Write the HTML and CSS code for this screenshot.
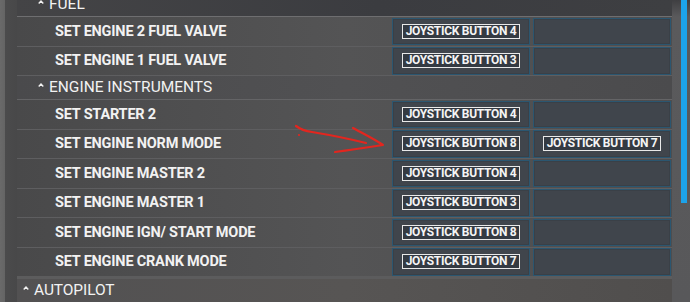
FILE: index.html
```html
<!DOCTYPE html>
<html>
<head>
<meta charset="utf-8">
<link rel="stylesheet" href="styles.css">
</head>
<body>
<div class="app">
  <div class="edge"></div>
  <div class="list">
    <div class="cat sub first"><svg class="caret" viewBox="0 0 6 4"><polyline points="0.7,3.4 3,1 5.3,3.4"/></svg><span>FUEL</span></div>
    <div class="row"><div class="name">SET ENGINE 2 FUEL VALVE</div><div class="cell"><span class="key">JOYSTICK BUTTON 4</span></div><div class="cell"></div></div>
    <div class="row"><div class="name">SET ENGINE 1 FUEL VALVE</div><div class="cell"><span class="key">JOYSTICK BUTTON 3</span></div><div class="cell"></div></div>
    <div class="cat sub"><svg class="caret" viewBox="0 0 6 4"><polyline points="0.7,3.4 3,1 5.3,3.4"/></svg><span>ENGINE INSTRUMENTS</span></div>
    <div class="row"><div class="name">SET STARTER 2</div><div class="cell"><span class="key">JOYSTICK BUTTON 4</span></div><div class="cell"></div></div>
    <div class="row"><div class="name">SET ENGINE NORM MODE</div><div class="cell"><span class="key">JOYSTICK BUTTON 8</span></div><div class="cell"><span class="key">JOYSTICK BUTTON 7</span></div></div>
    <div class="row"><div class="name">SET ENGINE MASTER 2</div><div class="cell"><span class="key">JOYSTICK BUTTON 4</span></div><div class="cell"></div></div>
    <div class="row"><div class="name">SET ENGINE MASTER 1</div><div class="cell"><span class="key">JOYSTICK BUTTON 3</span></div><div class="cell"></div></div>
    <div class="row"><div class="name">SET ENGINE IGN/ START MODE</div><div class="cell"><span class="key">JOYSTICK BUTTON 8</span></div><div class="cell"></div></div>
    <div class="row last"><div class="name">SET ENGINE CRANK MODE</div><div class="cell"><span class="key">JOYSTICK BUTTON 7</span></div><div class="cell"></div></div>
    <div class="cat main"><svg class="caret" viewBox="0 0 6 4"><polyline points="0.7,3.4 3,1 5.3,3.4"/></svg><span>AUTOPILOT</span></div>
  </div>
  <div class="scroll"><div class="track"><div class="thumb"></div></div></div>
  <svg class="arrow" viewBox="0 0 690 302" width="690" height="302">
    <path d="M296 126 C300 129 305 131 312 132 C330 135 350 139 366 143" />
    <path d="M353 128 C362 133 374 139 383 145 C370 147 350 150 335 152" />
    <circle cx="299" cy="135" r="1.1" />
  </svg>
</div>
</body>
</html>
```
FILE: styles.css
```css
html, body {
  margin: 0;
  padding: 0;
  background: #4a4a4b;
  overflow: hidden;
}
.app {
  position: relative;
  display: flex;
  width: 690px;
  height: 302px;
  overflow: hidden;
  font-family: Roboto, "Liberation Sans", sans-serif;
  color: #f2f2f2;
}
.edge {
  width: 17px;
  flex: none;
  background: linear-gradient(to right, #6a6a6a 0, #646464 5px, #4b4b4c 5px, #484849 17px);
}
.list {
  width: 655px;
  flex: none;
  display: flex;
  flex-direction: column;
  background: linear-gradient(to right, #49494a, #545455 50%, #4d4d4f);
}
.cat {
  display: flex;
  align-items: center;
  height: 23px;
  border-bottom: 1px solid #646466;
  font-size: 15.5px;
  font-weight: 400;
  line-height: 23px;
  letter-spacing: 0;
  background: linear-gradient(to right, #4a4a4c, #515153 50%, #4b4b4d);
}
.cat.first {
  margin-top: -7px;
  background: linear-gradient(to right, #444446, #3b3c40 55%, #3e3f42);
  border-bottom-color: #6e6e70;
}
.cat.sub { padding-left: 21px; }
.cat.main {
  padding-left: 6px;
  flex: 1;
  border-bottom: 0;
  letter-spacing: -0.1px;
  background: linear-gradient(to right, #525152, #575554 50%, #504e4d);
}
.caret {
  width: 6px;
  height: 4px;
  margin-right: 5px;
  margin-top: -6px;
  fill: none;
  stroke: #f2f2f2;
  stroke-width: 1.4;
}
.row {
  display: grid;
  grid-template-columns: 1fr 138px 138px;
  column-gap: 3px;
  padding-right: 1px;
  height: 28.5px;
  border-bottom: 1px solid #5e5e60;
}
.row.last { border-bottom: 3.5px solid #5c5c5d; }
.name {
  padding-left: 38px;
  display: flex;
  align-items: center;
  font-size: 14.5px;
  font-weight: 700;
  letter-spacing: -0.2px;
  white-space: nowrap;
}
.cell {
  display: flex;
  align-items: center;
  justify-content: center;
  margin: 0.5px 0;
  background: #40454c;
  border: 1px solid #2b5670;
  box-shadow: inset 0 0 0 1px #3a4047;
}
.key {
  display: block;
  height: 13px;
  line-height: 13px;
  padding: 0 3px;
  border: 1.5px solid #e9e9e9;
  background: #343a42;
  font-size: 12px;
  font-weight: 700;
  letter-spacing: -0.3px;
  color: #f4f4f4;
  white-space: nowrap;
}
.scroll {
  flex: 1;
  display: flex;
  background: linear-gradient(to bottom, #3f3f42 0, #5a5a5c 17px, #58585a 100%);
}
.track {
  margin-left: 9px;
  width: 6px;
}
.thumb {
  height: 203px;
  background: #1ca3ea;
}
.arrow {
  position: absolute;
  left: 0;
  top: 0;
  pointer-events: none;
}
.arrow path {
  fill: none;
  stroke: #e2261f;
  stroke-width: 2.2;
  stroke-linecap: round;
  stroke-linejoin: round;
}
.arrow circle { fill: #e2261f; }
```
